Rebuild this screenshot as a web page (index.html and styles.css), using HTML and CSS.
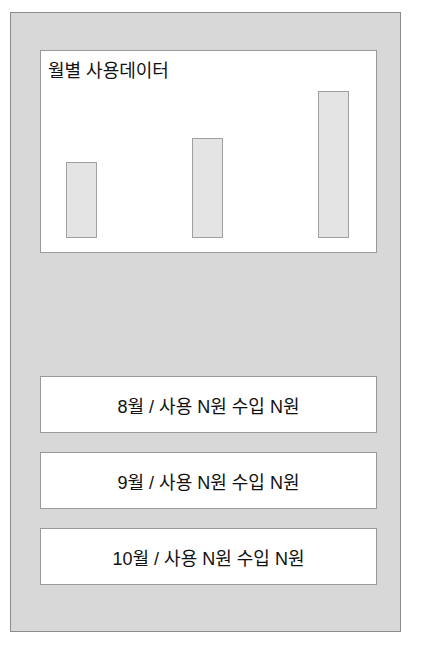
FILE: index.html
```html
<!DOCTYPE html>
<html lang="ko">
<head>
    <meta charset="UTF-8">
    <meta name="viewport" content="width=device-width, initial-scale=1.0">
    <title>월별 사용데이터</title>
    <link rel="stylesheet" href="styles.css">
</head>
<body>
    <div class="screen">
        <div class="chart">
            <h2 class="chart-title">월별 사용데이터</h2>
            <div class="bars">
                <div class="bar" style="height:76px"></div>
                <div class="bar" style="height:100px"></div>
                <div class="bar" style="height:147px"></div>
            </div>
        </div>
        <div class="months">
            <div class="month">8월 / 사용 N원 수입 N원</div>
            <div class="month">9월 / 사용 N원 수입 N원</div>
            <div class="month">10월 / 사용 N원 수입 N원</div>
        </div>
    </div>
</body>
</html>
```

FILE: styles.css
```css
body { margin: 0; font-family: "Liberation Sans", "Noto Sans CJK KR", sans-serif; color: #111; }
.screen { margin: 12px 0 0 10px; width: 389px; height: 618px; border: 1px solid #8c8c8c; background-color: #d8d8d8; }
.chart { margin: 37px 0 0 29px; width: 335px; height: 201px; border: 1px solid #999; background-color: #fff; display: flex; flex-direction: column; }
.chart-title { margin: 0; padding: 7px 0 0 7px; font-size: 18px; font-weight: normal; line-height: 26px; }
.bars { flex: 1; display: flex; align-items: flex-end; gap: 95px; padding: 0 0 14px 25px; }
.bar { width: 31px; border: 1px solid #a0a0a0; background-color: #e4e4e4; box-sizing: border-box; }
.months { margin: 123px 0 0 29px; display: flex; flex-direction: column; gap: 19px; }
.month { width: 335px; height: 55px; border: 1px solid #999; background-color: #fff; display: flex; align-items: center; justify-content: center; font-size: 18px; }
```
